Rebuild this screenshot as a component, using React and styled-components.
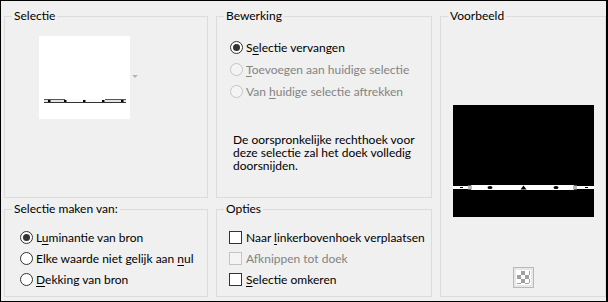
import React from "react";
import styled, { createGlobalStyle } from "styled-components";

const GlobalStyle = createGlobalStyle`
  html, body {
    margin: 0;
    padding: 0;
    background: #f0f0f0;
  }
  body {
    font-family: Lato, "Noto Sans", Arial, sans-serif;
    font-size: 12px;
    color: #000;
  }
`;

const Dialog = styled.div`
  box-sizing: border-box;
  width: 608px;
  height: 302px;
  background: #f0f0f0;
  border: 1px solid #000;
  border-right-width: 2px;
  padding: 15px 0 4px 3px;
  display: grid;
  grid-template-columns: 204px 216px 1fr;
  grid-template-rows: 182px 88px;
  column-gap: 8px;
  row-gap: 11px;
`;

const Group = styled.div`
  position: relative;
  box-sizing: border-box;
  border: 1px solid #dcdcdc;
  grid-column: ${(p) => p.$col || "auto"};
  grid-row: ${(p) => p.$rows || "auto"};
  padding: ${(p) => p.$pad || "0"};
  display: flex;
  flex-direction: column;
  align-items: ${(p) => (p.$center ? "center" : "stretch")};
  min-width: 0;
`;

const Legend = styled.span`
  position: absolute;
  top: -8px;
  left: ${(p) => p.$left || 7}px;
  padding: 0 2px;
  background: #f0f0f0;
  line-height: 14px;
  white-space: nowrap;
`;

const Option = styled.label`
  display: flex;
  align-items: center;
  gap: ${(p) => p.$gap || 3}px;
  height: ${(p) => p.$h || 22}px;
  white-space: nowrap;
  color: ${(p) => (p.$disabled ? "#838383" : "#000")};
  u {
    text-underline-offset: 2px;
  }
`;

const RadioDot = styled.span`
  box-sizing: border-box;
  width: 13px;
  height: 13px;
  border-radius: 50%;
  border: 1px solid ${(p) => (p.$disabled ? "#c4c4c4" : "#333")};
  background: ${(p) => (p.$disabled ? "#f4f4f4" : "#fff")};
  display: flex;
  align-items: center;
  justify-content: center;
  flex: none;
  &::after {
    content: "";
    width: 7px;
    height: 7px;
    border-radius: 50%;
    background: #333;
    display: ${(p) => (p.$checked ? "block" : "none")};
  }
`;

const CheckBox = styled.span`
  box-sizing: border-box;
  width: 13px;
  height: 13px;
  border: 1px solid ${(p) => (p.$disabled ? "#c4c4c4" : "#333")};
  background: ${(p) => (p.$disabled ? "#f4f4f4" : "#fff")};
  flex: none;
`;

const Note = styled.p`
  margin: 31px 0 0 3px;
  line-height: 13px;
  width: 190px;
`;

const SourceRow = styled.div`
  display: flex;
  align-items: center;
  gap: 2px;
`;

const SourceThumb = styled.div`
  width: 91px;
  height: 83px;
  background: #fff;
  display: flex;
`;

const DropArrow = styled.span`
  width: 0;
  height: 0;
  border-left: 3px solid transparent;
  border-right: 3px solid transparent;
  border-top: 3px solid #b4b4b4;
  margin-top: -2px;
`;

const PreviewBox = styled.div`
  width: 141px;
  height: 112px;
  background: #000;
  display: flex;
`;

const CheckerButton = styled.div`
  box-sizing: border-box;
  width: 21px;
  height: 21px;
  margin-top: 50px;
  padding: 2px;
  border: 1px solid #b9b9b9;
  background: #e8e8e8;
  display: flex;
  &::after {
    content: "";
    flex: 1;
    border: 1px solid #fff;
    background-color: #fff;
    background-image: conic-gradient(#a0a0a0 25%, #fff 0 50%, #a0a0a0 0 75%, #fff 0);
    background-size: 8px 8px;
  }
`;

function Radio({ checked, disabled, children, h }) {
  return (
    <Option $disabled={disabled} $h={h}>
      <RadioDot $checked={checked} $disabled={disabled} />
      <span>{children}</span>
    </Option>
  );
}

function Check({ disabled, children }) {
  return (
    <Option $disabled={disabled} $h={21} $gap={4}>
      <CheckBox $disabled={disabled} />
      <span>{children}</span>
    </Option>
  );
}

function SourceLines() {
  const dots = [10, 26, 45, 64, 83];
  return (
    <svg width="91" height="83" viewBox="0 0 91 83">
      <rect x="5" y="63" width="82" height="3" fill="#e4e4e4" />
      <rect x="5" y="63" width="82" height="1" fill="#555" />
      <rect x="5" y="66" width="82" height="1" fill="#333" />
      <rect x="26" y="63" width="40" height="3" fill="#fafafa" />
      {dots.map((x) => (
        <rect key={x} x={x - 1} y="64" width="2.5" height="2" fill="#000" />
      ))}
    </svg>
  );
}

function PreviewShape() {
  return (
    <svg width="141" height="112" viewBox="0 0 141 112">
      <rect x="0" y="81" width="141" height="3" fill="#fff" />
      <rect x="18" y="80" width="103" height="5" fill="#fff" />
      <rect x="15" y="80.5" width="4" height="4" fill="#b8b8b8" />
      <rect x="120" y="80.5" width="4" height="4" fill="#b8b8b8" />
      <rect x="7" y="82" width="3" height="1" fill="#000" />
      <rect x="132" y="82" width="3" height="1" fill="#000" />
      <ellipse cx="37" cy="82.5" rx="2.5" ry="1.5" fill="#000" />
      <path d="M67.5 84.5 L70.5 80.5 L73.5 84.5 Z" fill="#000" />
      <ellipse cx="103" cy="82.5" rx="2.5" ry="1.5" fill="#000" />
    </svg>
  );
}

export default function App() {
  return (
    <>
      <GlobalStyle />
      <Dialog>
        <Group $pad="19px 0 0 34px">
          <Legend>Selectie</Legend>
          <SourceRow>
            <SourceThumb>
              <SourceLines />
            </SourceThumb>
            <DropArrow />
          </SourceRow>
        </Group>

        <Group $pad="19px 0 0 13px">
          <Legend>Bewerking</Legend>
          <Radio checked>
            S<u>e</u>lectie vervangen
          </Radio>
          <Radio disabled>
            <u>T</u>oevoegen aan huidige selectie
          </Radio>
          <Radio disabled>
            Van <u>h</u>uidige selectie aftrekken
          </Radio>
          <Note>
            De oorspronkelijke rechthoek voor deze selectie zal het doek
            volledig doorsnijden.
          </Note>
        </Group>

        <Group $col="3" $rows="1 / span 2" $pad="88px 0 0 0" $center>
          <Legend>Voorbeeld</Legend>
          <PreviewBox>
            <PreviewShape />
          </PreviewBox>
          <CheckerButton />
        </Group>

        <Group $pad="17px 0 0 15px">
          <Legend>Selectie maken van:</Legend>
          <Radio checked h={21}>
            L<u>u</u>minantie van bron
          </Radio>
          <Radio h={21}>
            Elke waarde niet gelijk aan <u>n</u>ul
          </Radio>
          <Radio h={21}>
            <u>D</u>ekking van bron
          </Radio>
        </Group>

        <Group $pad="17px 0 0 12px">
          <Legend>Opties</Legend>
          <Check>
            Naar <u>l</u>inkerbovenhoek verplaatsen
          </Check>
          <Check disabled>
            Af<u>k</u>nippen tot doek
          </Check>
          <Check>
            <u>S</u>electie omkeren
          </Check>
        </Group>
      </Dialog>
    </>
  );
}
